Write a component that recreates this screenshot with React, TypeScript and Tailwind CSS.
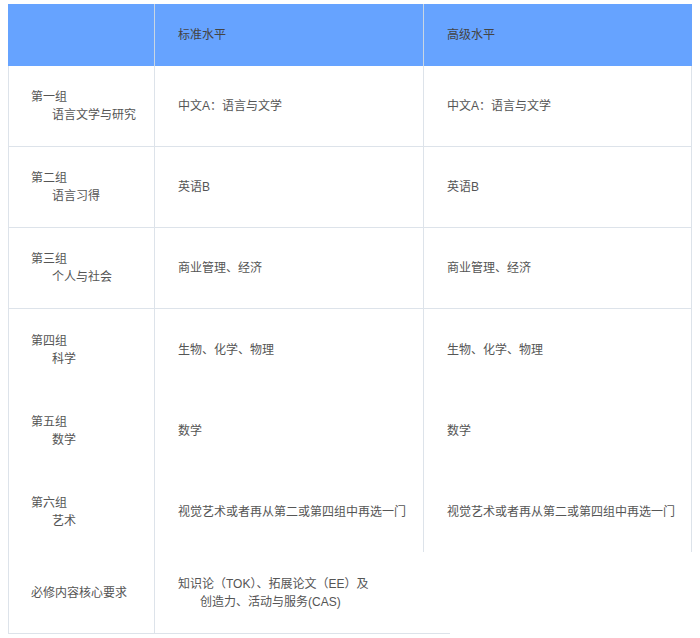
const rows = [
  { g: '第一组', s: '语言文学与研究', v: '中文A：语言与文学', line: true },
  { g: '第二组', s: '语言习得', v: '英语B', line: true },
  { g: '第三组', s: '个人与社会', v: '商业管理、经济', line: true },
  { g: '第四组', s: '科学', v: '生物、化学、物理', line: false },
  { g: '第五组', s: '数学', v: '数学', line: false },
  { g: '第六组', s: '艺术', v: '视觉艺术或者再从第二或第四组中再选一门', line: false },
]

export default function App() {
  return (
    <div className="h-[638px] w-[700px] bg-white pt-1 pl-2 text-[12px] text-[#555]" style={{ fontFamily: '"Liberation Sans", "Noto Sans CJK SC", sans-serif' }}>
      <div className="w-[684px]">
        <div className="flex h-[62px] bg-[#66a3ff] text-[#444]">
          <div className="w-[147px] border-r border-[#c9d6e3]" />
          <div className="flex w-[269px] items-center border-r border-[#c9d6e3] pl-[23px]">标准水平</div>
          <div className="flex flex-1 items-center pl-[23px]">高级水平</div>
        </div>
        {rows.map((r) => (
          <div key={r.g} className={`flex h-[81px] border-l border-[#dde3ea] ${r.line ? 'border-b' : ''} border-[#dde3ea]`}>
            <div className="flex w-[146px] flex-col justify-center border-r border-[#dde3ea] pl-[22px] leading-[18px]">
              <div>{r.g}</div>
              <div className="pl-[21px]">{r.s}</div>
            </div>
            <div className="flex w-[269px] items-center border-r border-[#dde3ea] pl-[23px]">{r.v}</div>
            <div className="flex flex-1 items-center border-r border-[#dde3ea] pl-[23px]">{r.v}</div>
          </div>
        ))}
        <div className="flex h-[82px] w-[442px] border-b border-l border-[#dde3ea]">
          <div className="flex w-[146px] items-center border-r border-[#dde3ea] pl-[22px]">必修内容核心要求</div>
          <div className="flex flex-col justify-center pl-[23px] leading-[18px]">
            <div>知识论（TOK）、拓展论文（EE）及</div>
            <div className="pl-[22px]">创造力、活动与服务(CAS)</div>
          </div>
        </div>
      </div>
    </div>
  )
}
